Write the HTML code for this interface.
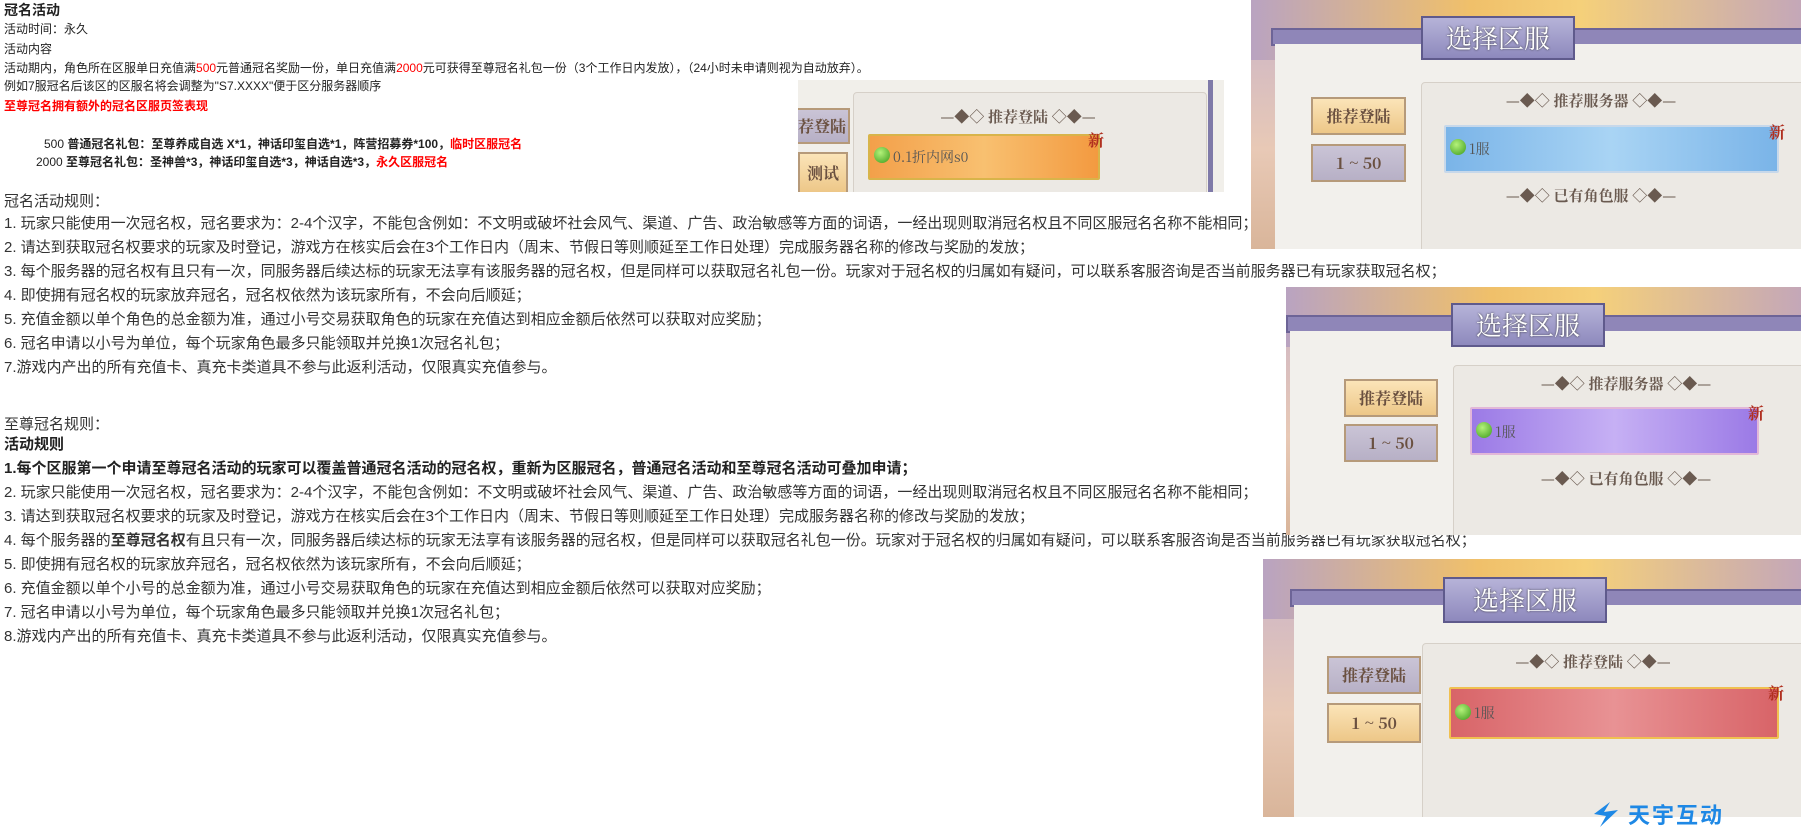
<!DOCTYPE html>
<html><head><meta charset="utf-8"><style>
body{margin:0;width:1801px;height:829px;overflow:hidden;background:#fff;position:relative;font-family:"Liberation Sans","Noto Sans CJK SC",sans-serif;color:#333}
.t{position:absolute;left:4px;white-space:nowrap;line-height:1}
.s{font-size:12px;color:#222}
.r{font-size:15px;color:#333}
.red{color:#f00}
.b{font-weight:bold}
.img{position:absolute;overflow:hidden;background:linear-gradient(180deg,#c9b3c8,#e8c9b6 60%,#d9b59a)}
.top{position:absolute;left:0;right:0;top:0;height:60px;background:linear-gradient(90deg,#b9a3c1,#f0c06a 40%,#f5d07a 60%,#c4a7b8)}
.frame{position:absolute;background:#8f86b8;border:2px solid #6d6497}
.panel{position:absolute;background:#f2f0ec}
.inner{position:absolute;background:#ece9e4;border:1px solid #d6d0c8;border-radius:4px}
.title{position:absolute;background:linear-gradient(#b6b3d8,#8e89bd);border:2px solid #5f5a8c;color:#fff;font-family:"Noto Serif CJK SC",serif;font-size:26px;text-align:center;text-shadow:0 0 2px #333}
.btn{position:absolute;font-family:"Noto Serif CJK SC",serif;font-size:16px;font-weight:bold;color:#6a5040;text-align:center;border:2px solid #b69a7a;white-space:nowrap;overflow:hidden}
.gold{background:linear-gradient(#fbe4b8,#edc788)}
.gray{background:linear-gradient(#cac4d6,#b7b0c6)}
.hd{position:absolute;font-family:"Noto Serif CJK SC",serif;font-size:15px;color:#6a5a50;font-weight:bold;white-space:nowrap}
.srv{position:absolute;border:2px solid #d8b44a;border-radius:2px}
.dot{position:absolute;width:16px;height:16px;border-radius:50%;background:radial-gradient(circle at 40% 35%,#b4f27a,#3a9a1a)}
.sl{position:absolute;font-family:"Noto Serif CJK SC",serif;font-size:14px;color:#555}
.nw{position:absolute;font-family:"Noto Serif CJK SC",serif;font-size:16px;font-weight:bold;color:#b03020}
</style></head><body>

<div class="t b" style="top:3px;font-size:14px;color:#222">冠名活动</div>
<div class="t s" style="top:23px">活动时间：永久</div>
<div class="t s" style="top:43px">活动内容</div>
<div class="t s" style="top:62px">活动期内，角色所在区服单日充值满<span class="red">500</span>元普通冠名奖励一份，单日充值满<span class="red">2000</span>元可获得至尊冠名礼包一份（3个工作日内发放），（24小时未申请则视为自动放弃）。</div>
<div class="t s" style="top:80px">例如7服冠名后该区的区服名将会调整为"S7.XXXX"便于区分服务器顺序</div>
<div class="t s b red" style="top:100px">至尊冠名拥有额外的冠名区服页签表现</div>
<div class="t s" style="top:138px;left:44px">500 <b>普通冠名礼包：至尊养成自选 X*1，神话印玺自选*1，阵营招募券*100，<span class="red">临时区服冠名</span></b></div>
<div class="t s" style="top:156px;left:36px">2000 <b>至尊冠名礼包：圣神兽*3，神话印玺自选*3，神话自选*3，<span class="red">永久区服冠名</span></b></div>

<div class="t r" style="top:194px">冠名活动规则：</div>
<div class="t r" style="top:216px">1. 玩家只能使用一次冠名权，冠名要求为：2-4个汉字，不能包含例如：不文明或破坏社会风气、渠道、广告、政治敏感等方面的词语，一经出现则取消冠名权且不同区服冠名名称不能相同；</div>
<div class="t r" style="top:240px">2. 请达到获取冠名权要求的玩家及时登记，游戏方在核实后会在3个工作日内（周末、节假日等则顺延至工作日处理）完成服务器名称的修改与奖励的发放；</div>
<div class="t r" style="top:264px">3. 每个服务器的冠名权有且只有一次，同服务器后续达标的玩家无法享有该服务器的冠名权，但是同样可以获取冠名礼包一份。玩家对于冠名权的归属如有疑问，可以联系客服咨询是否当前服务器已有玩家获取冠名权；</div>
<div class="t r" style="top:288px">4. 即使拥有冠名权的玩家放弃冠名，冠名权依然为该玩家所有，不会向后顺延；</div>
<div class="t r" style="top:312px">5. 充值金额以单个角色的总金额为准，通过小号交易获取角色的玩家在充值达到相应金额后依然可以获取对应奖励；</div>
<div class="t r" style="top:336px">6. 冠名申请以小号为单位，每个玩家角色最多只能领取并兑换1次冠名礼包；</div>
<div class="t r" style="top:360px">7.游戏内产出的所有充值卡、真充卡类道具不参与此返利活动，仅限真实充值参与。</div>

<div class="t r" style="top:417px">至尊冠名规则：</div>
<div class="t r b" style="top:437px;color:#222">活动规则</div>
<div class="t r b" style="top:461px;color:#222">1.每个区服第一个申请至尊冠名活动的玩家可以覆盖普通冠名活动的冠名权，重新为区服冠名，普通冠名活动和至尊冠名活动可叠加申请；</div>
<div class="t r" style="top:485px">2. 玩家只能使用一次冠名权，冠名要求为：2-4个汉字，不能包含例如：不文明或破坏社会风气、渠道、广告、政治敏感等方面的词语，一经出现则取消冠名权且不同区服冠名名称不能相同；</div>
<div class="t r" style="top:509px">3. 请达到获取冠名权要求的玩家及时登记，游戏方在核实后会在3个工作日内（周末、节假日等则顺延至工作日处理）完成服务器名称的修改与奖励的发放；</div>
<div class="t r" style="top:533px">4. 每个服务器的<b>至尊冠名权</b>有且只有一次，同服务器后续达标的玩家无法享有该服务器的冠名权，但是同样可以获取冠名礼包一份。玩家对于冠名权的归属如有疑问，可以联系客服咨询是否当前服务器已有玩家获取冠名权；</div>
<div class="t r" style="top:557px">5. 即使拥有冠名权的玩家放弃冠名，冠名权依然为该玩家所有，不会向后顺延；</div>
<div class="t r" style="top:581px">6. 充值金额以单个小号的总金额为准，通过小号交易获取角色的玩家在充值达到相应金额后依然可以获取对应奖励；</div>
<div class="t r" style="top:605px">7. 冠名申请以小号为单位，每个玩家角色最多只能领取并兑换1次冠名礼包；</div>
<div class="t r" style="top:629px">8.游戏内产出的所有充值卡、真充卡类道具不参与此返利活动，仅限真实充值参与。</div>

<!-- small image -->
<div class="img" style="left:798px;top:80px;width:426px;height:112px;background:#f1efea">
  <div class="btn gray" style="left:-20px;top:28px;width:66px;height:32px;line-height:32px;text-align:right;padding-right:2px">推荐登陆</div>
  <div class="btn gold" style="left:0;top:72px;width:46px;height:38px;line-height:38px">测试</div>
  <div class="inner" style="left:55px;top:12px;width:352px;height:110px"></div>
  <div class="hd" style="left:95px;top:26px;width:250px;text-align:center">—◆◇ 推荐登陆 ◇◆—</div>
  <div class="srv" style="left:70px;top:54px;width:228px;height:42px;background:linear-gradient(90deg,#f3a04a,#f8c070,#f39a40)"></div>
  <div class="nw" style="left:290px;top:48px">新</div>
  <div class="dot" style="left:76px;top:67px"></div>
  <div class="sl" style="left:95px;top:67px">0.1折内网s0</div>
  <div style="position:absolute;left:410px;top:0;width:5px;height:112px;background:#7f7aa8"></div>
</div>

<!-- image 1 -->
<div class="img" style="left:1251px;top:0;width:550px;height:249px">
  <div class="top"></div>
  <div class="frame" style="left:20px;top:28px;width:540px;height:14px"></div>
  <div class="panel" style="left:24px;top:44px;width:530px;height:210px"></div>
  <div class="title" style="left:170px;top:16px;width:150px;height:40px;line-height:40px">选择区服</div>
  <div class="btn gold" style="left:60px;top:97px;width:91px;height:34px;line-height:34px">推荐登陆</div>
  <div class="btn gray" style="left:60px;top:144px;width:91px;height:34px;line-height:34px">1 ~ 50</div>
  <div class="inner" style="left:170px;top:82px;width:400px;height:180px"></div>
  <div class="hd" style="left:190px;top:90px;width:300px;text-align:center">—◆◇ 推荐服务器 ◇◆—</div>
  <div class="srv" style="left:193px;top:125px;width:331px;height:44px;background:linear-gradient(90deg,#7ab4e8,#a9d4f4,#7ab4e8);border-color:#c7d8ea"></div>
  <div class="nw" style="left:518px;top:120px">新</div>
  <div class="dot" style="left:199px;top:139px"></div>
  <div class="sl" style="left:218px;top:139px">1服</div>
  <div class="hd" style="left:190px;top:185px;width:300px;text-align:center">—◆◇ 已有角色服 ◇◆—</div>
</div>

<!-- image 2 -->
<div class="img" style="left:1286px;top:287px;width:515px;height:248px">
  <div class="top"></div>
  <div class="frame" style="left:0;top:28px;width:520px;height:14px"></div>
  <div class="panel" style="left:4px;top:44px;width:520px;height:210px"></div>
  <div class="title" style="left:165px;top:16px;width:150px;height:40px;line-height:40px">选择区服</div>
  <div class="btn gold" style="left:58px;top:92px;width:90px;height:34px;line-height:34px">推荐登陆</div>
  <div class="btn gray" style="left:58px;top:137px;width:90px;height:34px;line-height:34px">1 ~ 50</div>
  <div class="inner" style="left:167px;top:78px;width:400px;height:180px"></div>
  <div class="hd" style="left:190px;top:86px;width:300px;text-align:center">—◆◇ 推荐服务器 ◇◆—</div>
  <div class="srv" style="left:184px;top:120px;width:285px;height:44px;background:linear-gradient(90deg,#9b7ae6,#c6b0f4,#9b7ae6);border-color:#e2b7d8"></div>
  <div class="nw" style="left:462px;top:114px">新</div>
  <div class="dot" style="left:190px;top:135px"></div>
  <div class="sl" style="left:209px;top:135px">1服</div>
  <div class="hd" style="left:190px;top:181px;width:300px;text-align:center">—◆◇ 已有角色服 ◇◆—</div>
</div>

<!-- image 3 -->
<div class="img" style="left:1263px;top:559px;width:538px;height:258px">
  <div class="top"></div>
  <div class="frame" style="left:27px;top:30px;width:520px;height:14px"></div>
  <div class="panel" style="left:31px;top:46px;width:520px;height:215px"></div>
  <div class="title" style="left:180px;top:18px;width:160px;height:42px;line-height:42px">选择区服</div>
  <div class="btn gray" style="left:64px;top:97px;width:90px;height:34px;line-height:34px">推荐登陆</div>
  <div class="btn gold" style="left:64px;top:144px;width:90px;height:36px;line-height:36px">1 ~ 50</div>
  <div class="inner" style="left:159px;top:84px;width:400px;height:180px"></div>
  <div class="hd" style="left:180px;top:92px;width:300px;text-align:center">—◆◇ 推荐登陆 ◇◆—</div>
  <div class="srv" style="left:186px;top:128px;width:326px;height:48px;background:linear-gradient(90deg,#d86468,#e89294,#d86468);border-color:#f0c050"></div>
  <div class="nw" style="left:505px;top:122px">新</div>
  <div class="dot" style="left:192px;top:145px"></div>
  <div class="sl" style="left:211px;top:144px">1服</div>
</div>

<!-- logo -->
<div style="position:absolute;left:1590px;top:800px;width:210px;height:29px">
  <svg width="34" height="29" viewBox="0 0 34 29" style="position:absolute;left:0;top:0"><path d="M4 14 L20 2 L14 12 L28 10 L10 27 L16 16 Z" fill="#1e88e5"/></svg>
  <div style="position:absolute;left:38px;top:-2px;font-size:22px;font-weight:bold;color:#1e88e5;font-family:'Noto Sans CJK SC',sans-serif;letter-spacing:2px">天宇互动</div>
</div>
</body></html>
